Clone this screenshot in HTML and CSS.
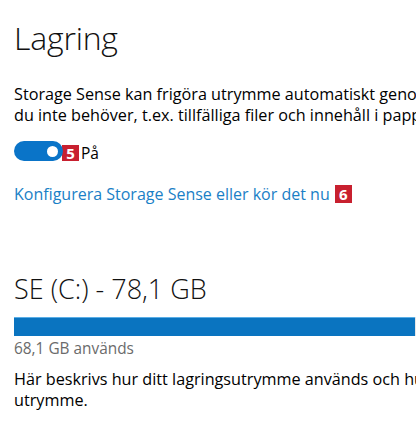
FILE: index.html
```html
<!DOCTYPE html>
<html lang="sv">
<head>
<meta charset="utf-8">
<link rel="stylesheet" href="styles.css">
</head>
<body>
<main class="page">
  <h1 class="title">Lagring</h1>
  <p class="text">Storage Sense kan frigöra utrymme automatiskt genom att ta bort filer som<br>du inte behöver, t.ex. tillfälliga filer och innehåll i papperskorgen.</p>
  <div class="toggle-row">
    <span class="toggle"><span class="knob"></span></span>
    <span class="badge badge-toggle">5</span>
    <span class="toggle-label">På</span>
  </div>
  <div class="link-row">
    <a class="link" href="#">Konfigurera Storage Sense eller kör det nu</a>
    <span class="badge badge-link">6</span>
  </div>
  <h2 class="drive">SE (C:) - 78,1 GB</h2>
  <div class="bar"><div class="bar-fill" style="width: 87.2%"></div></div>
  <p class="used">68,1 GB används</p>
  <p class="text desc">Här beskrivs hur ditt lagringsutrymme används och hur du kan frigöra<br>utrymme.</p>
</main>
</body>
</html>
```
FILE: styles.css
```css
html, body {
  margin: 0;
  padding: 0;
  background: #ffffff;
  overflow: hidden;
}
body {
  width: 416px;
  height: 426px;
  font-family: "Open Sans", "Noto Sans", sans-serif;
  color: #000;
}
.page {
  width: 416px;
  overflow: hidden;
  padding-left: 14px;
  padding-top: 18px;
  box-sizing: border-box;
}
.title {
  margin: 0;
  font-size: 32px;
  font-weight: 300;
  line-height: 40px;
  letter-spacing: -0.2px;
  color: #111;
}
.text {
  margin: 0;
  font-size: 16.2px;
  line-height: 21px;
  white-space: nowrap;
}
.title + .text {
  margin-top: 26px;
}
.toggle-row {
  display: flex;
  align-items: center;
  margin-top: 15px;
  height: 20px;
}
.toggle {
  flex: none;
  width: 49px;
  height: 20px;
  border-radius: 10px;
  background: #0a74c8;
  position: relative;
}
.knob {
  position: absolute;
  right: 5px;
  top: 4.5px;
  width: 11px;
  height: 11px;
  border-radius: 50%;
  background: #fff;
}
.badge {
  flex: none;
  display: inline-flex;
  align-items: center;
  justify-content: center;
  background: #c8202f;
  color: #fff;
  font-weight: 700;
  font-size: 15px;
  width: 17px;
}
.badge-toggle {
  height: 16px;
  margin-left: -1px;
  margin-top: 3px;
}
.toggle-label {
  font-size: 15.5px;
  margin-left: 2px;
  margin-top: 3px;
}
.link-row {
  display: flex;
  align-items: flex-start;
  margin-top: 23px;
  height: 21px;
}
.link {
  color: #1a80c6;
  text-decoration: none;
  font-size: 16px;
  line-height: 21px;
}
.badge-link {
  height: 18px;
  margin-left: 5px;
  margin-top: 1px;
}
.drive {
  margin: 0;
  margin-top: 65.5px;
  font-size: 27px;
  font-weight: 300;
  line-height: 36px;
  color: #111;
}
.bar {
  margin-top: 10.5px;
  height: 19px;
  width: 460px;
  background: #e6e6e6;
}
.bar-fill {
  height: 100%;
  background: #0a74c0;
  border-top: 1px solid #5aaee6;
  box-sizing: border-box;
}
.used {
  margin: 0;
  margin-top: 1.5px;
  font-size: 15.4px;
  color: #6b6b6b;
  line-height: 21px;
}
.desc {
  margin-top: 10.5px;
}
```
